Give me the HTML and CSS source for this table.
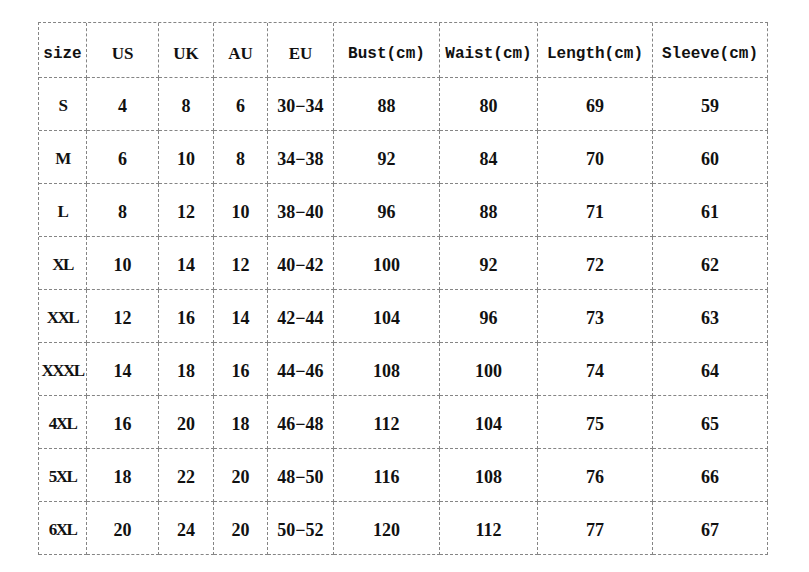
FILE: index.html
```html
<!DOCTYPE html>
<html>
<head>
<meta charset="utf-8">
<link rel="stylesheet" href="styles.css">
</head>
<body>
<div class="chart">
  <div class="cell head mono">size</div>
  <div class="cell head">US</div>
  <div class="cell head">UK</div>
  <div class="cell head">AU</div>
  <div class="cell head">EU</div>
  <div class="cell head mono">Bust(cm)</div>
  <div class="cell head mono">Waist(cm)</div>
  <div class="cell head mono">Length(cm)</div>
  <div class="cell head mono">Sleeve(cm)</div>

  <div class="cell lbl">S</div><div class="cell">4</div><div class="cell">8</div><div class="cell">6</div><div class="cell">30−34</div><div class="cell">88</div><div class="cell">80</div><div class="cell">69</div><div class="cell">59</div>
  <div class="cell lbl">M</div><div class="cell">6</div><div class="cell">10</div><div class="cell">8</div><div class="cell">34−38</div><div class="cell">92</div><div class="cell">84</div><div class="cell">70</div><div class="cell">60</div>
  <div class="cell lbl">L</div><div class="cell">8</div><div class="cell">12</div><div class="cell">10</div><div class="cell">38−40</div><div class="cell">96</div><div class="cell">88</div><div class="cell">71</div><div class="cell">61</div>
  <div class="cell lbl">XL</div><div class="cell">10</div><div class="cell">14</div><div class="cell">12</div><div class="cell">40−42</div><div class="cell">100</div><div class="cell">92</div><div class="cell">72</div><div class="cell">62</div>
  <div class="cell lbl">XXL</div><div class="cell">12</div><div class="cell">16</div><div class="cell">14</div><div class="cell">42−44</div><div class="cell">104</div><div class="cell">96</div><div class="cell">73</div><div class="cell">63</div>
  <div class="cell lbl">XXXL</div><div class="cell">14</div><div class="cell">18</div><div class="cell">16</div><div class="cell">44−46</div><div class="cell">108</div><div class="cell">100</div><div class="cell">74</div><div class="cell">64</div>
  <div class="cell lbl">4XL</div><div class="cell">16</div><div class="cell">20</div><div class="cell">18</div><div class="cell">46−48</div><div class="cell">112</div><div class="cell">104</div><div class="cell">75</div><div class="cell">65</div>
  <div class="cell lbl">5XL</div><div class="cell">18</div><div class="cell">22</div><div class="cell">20</div><div class="cell">48−50</div><div class="cell">116</div><div class="cell">108</div><div class="cell">76</div><div class="cell">66</div>
  <div class="cell lbl">6XL</div><div class="cell">20</div><div class="cell">24</div><div class="cell">20</div><div class="cell">50−52</div><div class="cell">120</div><div class="cell">112</div><div class="cell">77</div><div class="cell">67</div>
</div>
</body>
</html>
```

FILE: styles.css
```css
html, body {
  margin: 0;
  padding: 0;
  background: #ffffff;
}
body {
  padding: 22px 0 0 38px;
}
.chart {
  display: grid;
  grid-template-columns: 48px 72px 55px 54px 66px 106px 98px 115px 115px;
  grid-template-rows: 55px repeat(9, 53px);
  width: max-content;
  border-left: 1px dashed #858585;
  border-top: 1px dashed #858585;
}
.cell {
  box-sizing: border-box;
  border-right: 1px dashed #858585;
  border-bottom: 1px dashed #858585;
  display: flex;
  align-items: center;
  justify-content: center;
  font-family: "Liberation Serif", "Times New Roman", serif;
  font-weight: bold;
  font-size: 18px;
  color: #111;
  padding-top: 4px;
}
.head {
  font-size: 17px;
  padding-top: 7px;
}
.mono {
  font-family: "Liberation Mono", "DejaVu Sans Mono", monospace;
  font-weight: bold;
  font-size: 16px;
}
.lbl {
  font-size: 17px;
  letter-spacing: -1.5px;
}
```
